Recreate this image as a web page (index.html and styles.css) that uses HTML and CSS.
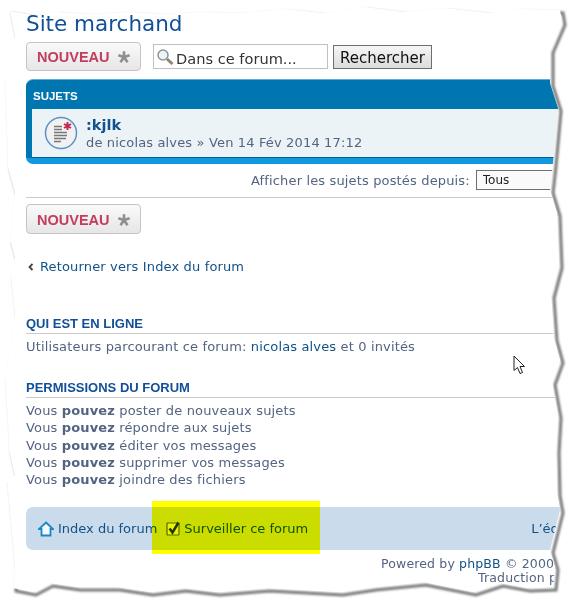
FILE: index.html
```html
<!DOCTYPE html>
<html lang="fr">
<head>
    <meta charset="UTF-8">
    <meta name="viewport" content="width=device-width, initial-scale=1.0">
    <title>Site marchand</title>
    <link rel="stylesheet" href="styles.css">
</head>
<body>

    <div class="page">
        <h2 class="forum-title">Site marchand</h2>

        <div class="action-bar">
            <a class="new-button" href="#">NOUVEAU
                <svg class="star" viewBox="0 0 16 16"><path d="M8 1.5V8M8 8L14.5 6M8 8L12 14M8 8L4 14M8 8L1.5 6" /></svg>
            </a>
            <div class="search-box">
                <svg class="lens" viewBox="0 0 18 18">
                    <circle cx="7" cy="7" r="5" />
                    <path d="M11 11L16.5 16" />
                </svg>
                <input type="text" value="Dans ce forum...">
            </div>
            <button class="search-button">Rechercher</button>
        </div>

        <!-- Topic list -->
        <div class="topics">
            <div class="topics-head">SUJETS</div>
            <div class="topic-row">
                <svg class="topic-icon" viewBox="0 0 34 34">
                    <circle class="disc" cx="17" cy="17" r="15.5" />
                    <path class="lines" d="M10 10.500H18M10 13.500H18M10 16.500H23M10 19.500H23M10 22.500H22M10 25.500H17" />
                    <path class="mark" d="M23.500 6V14M20 8L27 12M27 8L20 12" />
                </svg>
                <div>
                    <a class="topic-title" href="#">:kjlk</a>
                    <div class="topic-meta">de <a href="#">nicolas alves</a> » Ven 14 Fév 2014 17:12</div>
                </div>
            </div>
        </div>

        <div class="sort-row">
            <span>Afficher les sujets postés depuis:</span>
            <select class="sort-select"><option>Tous</option></select>
        </div>
        <hr class="rule">

        <a class="new-button second" href="#">NOUVEAU
            <svg class="star" viewBox="0 0 16 16"><path d="M8 1.5V8M8 8L14.5 6M8 8L12 14M8 8L4 14M8 8L1.5 6" /></svg>
        </a>

        <div class="back-link">
            <svg class="back-arrow" viewBox="0 0 6 8"><path d="M4.500 1L1.500 4L4.500 7" /></svg>
            <a href="#">Retourner vers Index du forum</a>
        </div>

        <h3 class="section-title online">QUI EST EN LIGNE</h3>
        <p class="online-text">Utilisateurs parcourant ce forum: <a href="#">nicolas alves</a> et 0 invités</p>

        <h3 class="section-title perms">PERMISSIONS DU FORUM</h3>
        <ul class="perm-list">
            <li>Vous <strong>pouvez</strong> poster de nouveaux sujets</li>
            <li>Vous <strong>pouvez</strong> répondre aux sujets</li>
            <li>Vous <strong>pouvez</strong> éditer vos messages</li>
            <li>Vous <strong>pouvez</strong> supprimer vos messages</li>
            <li>Vous <strong>pouvez</strong> joindre des fichiers</li>
        </ul>

        <div class="nav-bar">
            <svg class="home-icon" viewBox="0 0 16 16">
                <path d="M8 1.500L15 8H12.500V14.500H3.500V8H1Z" />
            </svg>
            <a href="#">Index du forum</a>
            <svg class="check-icon" viewBox="0 0 15 15">
                <rect x="1" y="2" width="12" height="12" rx="1" />
                <path d="M3.500 7.500L6.500 11.500L12.500 1.500" />
            </svg>
            <a href="#">Surveiller ce forum</a>
            <a class="team-link" href="#">L’équipe du forum</a>
        </div>

        <div class="footer-line first">Powered by <a href="#">phpBB</a> © 2000, 2002, 2005, 2007 phpBB Group</div>
        <div class="footer-line second">Traduction par phpBB-fr.com</div>

        <div class="highlight"></div>

        <svg class="cursor" viewBox="0 0 14 20">
            <path d="M1 1V15.500L4.500 12.500L7 18.500L9.500 17.500L7 11.500H11.500Z" />
        </svg>

        <!-- Torn paper edge around the capture -->
        <svg class="torn-frame" viewBox="0 0 569 602">
            <defs>
                <filter id="soft" x="-5%" y="-5%" width="110%" height="110%">
                    <feGaussianBlur stdDeviation="1.300" />
                </filter>
                <clipPath id="outside">
                    <path clip-rule="evenodd" d="M0 0H569V602H0Z M10 11L33 15L57 12L90 14L133 12L160 14L205 12L240 13L285 9L325 13L365 7L405 12L445 8L490 13L520 9L560 10L562 22L550 50L550 83L558 108L553 163L550 190L557 213L558 240L559 265L551 295L554 338L560 360L552 382L558 415L556 450L557 493L560 510L550 550L555 567L553 587L527 588L500 583L473 592L423 582L373 587L340 592L267 588L217 592L183 588L150 592L117 587L77 587L50 583L33 592L13 588L15 567L10 513L7 480L15 476L9 450L8 422L5 378L15 316L11 276L15 258L10 240L15 193L8 167L7 133L5 80L15 37Z" />
                </clipPath>
            </defs>
            <path class="paper" fill-rule="evenodd" d="M0 0H569V602H0Z M10 11L33 15L57 12L90 14L133 12L160 14L205 12L240 13L285 9L325 13L365 7L405 12L445 8L490 13L520 9L560 10L562 22L550 50L550 83L558 108L553 163L550 190L557 213L558 240L559 265L551 295L554 338L560 360L552 382L558 415L556 450L557 493L560 510L550 550L555 567L553 587L527 588L500 583L473 592L423 582L373 587L340 592L267 588L217 592L183 588L150 592L117 587L77 587L50 583L33 592L13 588L15 567L10 513L7 480L15 476L9 450L8 422L5 378L15 316L11 276L15 258L10 240L15 193L8 167L7 133L5 80L15 37Z" />
            <g clip-path="url(#outside)">
                <path class="edge-shadow" filter="url(#soft)" d="M10 11L33 15L57 12L90 14L133 12L160 14L205 12L240 13L285 9L325 13L365 7L405 12L445 8L490 13L520 9L560 10L562 22L550 50L550 83L558 108L553 163L550 190L557 213L558 240L559 265L551 295L554 338L560 360L552 382L558 415L556 450L557 493L560 510L550 550L555 567L553 587L527 588L500 583L473 592L423 582L373 587L340 592L267 588L217 592L183 588L150 592L117 587L77 587L50 583L33 592L13 588L15 567L10 513L7 480L15 476L9 450L8 422L5 378L15 316L11 276L15 258L10 240L15 193L8 167L7 133L5 80L15 37Z" />
            </g>
        </svg>
    </div>

</body>
</html>
```

FILE: styles.css
```css
html, body {
    margin: 0;
    height: 602px;
    overflow: hidden;
    background-color: #fff;
}
.page {
    position: relative;
    width: 569px;
    height: 602px;
    overflow: hidden;
    padding: 10px 0 0 26px;
    box-sizing: border-box;
    font-family: "DejaVu Sans", Verdana, sans-serif;
    font-size: 13px;
    letter-spacing: 0.15px;
    color: #536482;
}
a {
    color: #105289;
    text-decoration: none;
}
.forum-title {
    margin: 0;
    height: 32px;
    line-height: 28px;
    font-size: 21.500px;
    font-weight: normal;
    letter-spacing: 0;
    color: #115098;
}
.action-bar {
    display: flex;
    align-items: center;
    height: 29px;
}
.new-button {
    display: flex;
    align-items: center;
    box-sizing: border-box;
    width: 115px;
    height: 29px;
    padding-left: 10px;
    border: 1px solid #c7c3bf;
    border-radius: 4px;
    background: linear-gradient(#fafafa, #e6e6e6);
    font-family: "Liberation Sans", Arial, sans-serif;
    font-size: 14.500px;
    font-weight: bold;
    letter-spacing: 0;
    color: #c33d5d;
}
.new-button.second {
    margin-top: 6px;
    height: 30px;
    padding-top: 1px;
}
.star {
    width: 14px;
    height: 14px;
    margin-left: 7px;
}
.star path {
    fill: none;
    stroke: #8f8f8f;
    stroke-width: 3;
}
.search-box {
    display: flex;
    align-items: center;
    box-sizing: border-box;
    width: 175px;
    height: 25px;
    margin-left: 12px;
    padding-left: 2px;
    border: 1px solid #c0c0c0;
    background-color: #fff;
}
.lens {
    flex: none;
    width: 18px;
    height: 18px;
}
.lens circle {
    fill: #eef3f6;
    stroke: #8a959c;
    stroke-width: 1.5;
}
.lens path {
    stroke: #8f8672;
    stroke-width: 3;
}
.search-box input {
    width: 150px;
    padding: 3px 0 0 2px;
    border: 0;
    outline: 0;
    font-family: "DejaVu Sans", Verdana, sans-serif;
    font-size: 14.600px;
    color: #333;
}
.search-button {
    box-sizing: border-box;
    width: 99px;
    height: 24px;
    margin: 1px 0 0 5px;
    padding: 2px 0 0;
    border: 1px solid #6e6e6e;
    background: linear-gradient(#f6f6f6, #dcdcdc);
    font-family: "DejaVu Sans", Verdana, sans-serif;
    font-size: 15px;
    color: #111;
}
/* Topic list */
.topics {
    box-sizing: border-box;
    width: 560px;
    height: 85px;
    margin-top: 8px;
    padding: 1px 0 0 6px;
    border-radius: 7px;
    background: linear-gradient(#0076b1 78px, #1199e0 78px);
    border-top: 1px solid #5aaed8;
}
.topics-head {
    height: 28px;
    line-height: 30px;
    padding-left: 1px;
    font-family: "Liberation Sans", Arial, sans-serif;
    font-size: 11.500px;
    font-weight: bold;
    letter-spacing: 0;
    color: #fff;
}
.topic-row {
    display: flex;
    align-items: center;
    box-sizing: border-box;
    height: 49px;
    padding-left: 12px;
    background-color: #ecf3f7;
    border-bottom: 1px solid #00608f;
}
.topic-icon {
    flex: none;
    width: 34px;
    height: 34px;
    margin-right: 8px;
}
.topic-icon .disc {
    fill: #f1f1f1;
    stroke: #5b93c6;
    stroke-width: 1.500;
}
.topic-icon .lines {
    fill: none;
    stroke: #777;
    stroke-width: 1.500;
}
.topic-icon .mark {
    fill: none;
    stroke: #c5264f;
    stroke-width: 2;
}
.topic-title {
    display: block;
    line-height: 20px;
    font-size: 14.500px;
    font-weight: bold;
    letter-spacing: 0;
}
.topic-meta {
    line-height: 16px;
}
.topic-meta a {
    color: #536482;
}
.sort-row {
    display: flex;
    align-items: center;
    width: 560px;
    height: 20px;
    margin-top: 6px;
    padding-left: 225px;
    box-sizing: border-box;
    white-space: nowrap;
}
.sort-select {
    flex: none;
    box-sizing: border-box;
    width: 120px;
    height: 20px;
    margin-left: 6px;
    padding-left: 2px;
    border: 1px solid #6e6e6e;
    background-color: #fafafa;
    font-family: "DejaVu Sans", Verdana, sans-serif;
    font-size: 12px;
    color: #222;
}
.rule {
    width: 560px;
    height: 1px;
    margin: 7px 0 0;
    border: 0;
    background-color: #cccccc;
}
.back-link {
    display: flex;
    align-items: center;
    height: 18px;
    margin-top: 23px;
    white-space: nowrap;
}
.back-arrow {
    width: 6px;
    height: 8px;
    margin: 2px 6px 0 2px;
}
.back-arrow path {
    fill: none;
    stroke: #444;
    stroke-width: 1.800;
}
.section-title {
    box-sizing: border-box;
    width: 560px;
    height: 20px;
    margin: 0;
    line-height: 20px;
    border-bottom: 1px solid #cccccc;
    font-family: "Liberation Sans", Arial, sans-serif;
    font-size: 13px;
    font-weight: bold;
    letter-spacing: 0;
    color: #115098;
}
.section-title.online {
    margin-top: 39px;
}
.section-title.perms {
    margin-top: 22px;
}
.online-text {
    margin: 4px 0 0;
    line-height: 18px;
}
.perm-list {
    margin: 4px 0 0;
    padding: 0;
    list-style: none;
    line-height: 17.250px;
}
.nav-bar {
    display: flex;
    align-items: center;
    box-sizing: border-box;
    width: 560px;
    height: 43px;
    margin-top: 19px;
    padding-left: 12px;
    border-radius: 7px;
    background-color: #cadceb;
    white-space: nowrap;
    letter-spacing: 0;
}
.home-icon {
    flex: none;
    width: 16px;
    height: 16px;
    margin-right: 4px;
}
.home-icon path {
    fill: #f4f9fc;
    stroke: #1a87c4;
    stroke-width: 1.800;
}
.check-icon {
    flex: none;
    width: 15px;
    height: 15px;
    margin: 0 3px 0 9px;
}
.check-icon rect {
    fill: #f0f0a0;
    stroke: #4f6a2a;
    stroke-width: 1.200;
}
.check-icon path {
    fill: none;
    stroke: #1d3a10;
    stroke-width: 2.500;
}
.team-link {
    margin-left: 223px;
}
.footer-line {
    line-height: 14px;
    font-size: 12.500px;
    white-space: nowrap;
}
.footer-line.first {
    margin: 7px 0 0 355px;
}
.footer-line.second {
    margin-left: 452px;
}
/* Marker and cursor drawn over the capture */
.highlight {
    position: absolute;
    left: 152px;
    top: 501px;
    width: 168px;
    height: 53px;
    background-color: #ffff00;
    mix-blend-mode: multiply;
}
.cursor {
    position: absolute;
    left: 513px;
    top: 355px;
    width: 14px;
    height: 20px;
}
.cursor path {
    fill: #fff;
    stroke: #222;
    stroke-width: 1;
}
.torn-frame {
    position: absolute;
    left: 0;
    top: 0;
    width: 569px;
    height: 602px;
}
.paper {
    fill: #fff;
}
.edge-shadow {
    fill: none;
    stroke: #777;
    stroke-width: 3;
    transform: translate(3px, 3px);
}
```
